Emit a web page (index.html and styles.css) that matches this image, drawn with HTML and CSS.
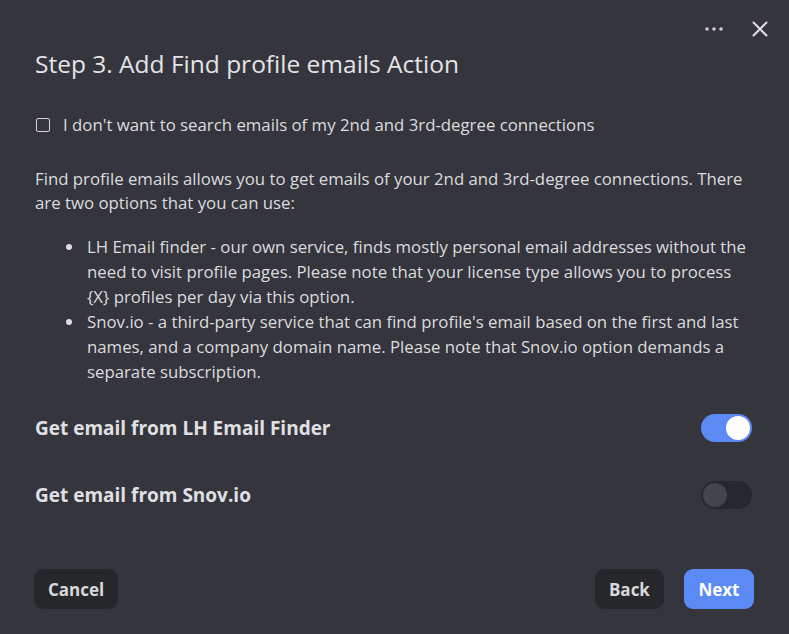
FILE: index.html
```html
<!DOCTYPE html>
<html>
<head>
<meta charset="utf-8">
<link rel="stylesheet" href="styles.css">
</head>
<body>
<div class="dialog">
  <div class="topbar">
    <button class="icon-btn" aria-label="More">
      <svg width="20" height="6" viewBox="0 0 20 6"><circle cx="3" cy="3" r="1.8" fill="#d0d0d4"/><circle cx="10" cy="3" r="1.8" fill="#d0d0d4"/><circle cx="17" cy="3" r="1.8" fill="#d0d0d4"/></svg>
    </button>
    <button class="icon-btn" aria-label="Close">
      <svg width="16" height="16" viewBox="0 0 16 16"><path d="M1.5 1.5L14.5 14.5M14.5 1.5L1.5 14.5" stroke="#e0e0e4" stroke-width="2" stroke-linecap="round"/></svg>
    </button>
  </div>
  <h1 class="title">Step 3. Add Find profile emails Action</h1>
  <label class="check-row">
    <span class="checkbox"></span>
    <span>I don't want to search emails of my 2nd and 3rd-degree connections</span>
  </label>
  <p class="desc">Find profile emails allows you to get emails of your 2nd and 3rd-degree connections. There are two options that you can use:</p>
  <ul class="list">
    <li>LH Email finder - our own service, finds mostly personal email addresses without the need to visit profile pages. Please note that your license type allows you to process {X} profiles per day via this option.</li>
    <li>Snov.io - a third-party service that can find profile's email based on the first and last names, and a company domain name. Please note that Snov.io option demands a separate subscription.</li>
  </ul>
  <div class="option">
    <span class="option-label">Get email from LH Email Finder</span>
    <span class="toggle on"><span class="knob"></span></span>
  </div>
  <div class="option">
    <span class="option-label">Get email from Snov.io</span>
    <span class="toggle"><span class="knob"></span></span>
  </div>
  <div class="footer">
    <button class="btn">Cancel</button>
    <div class="right">
      <button class="btn">Back</button>
      <button class="btn primary">Next</button>
    </div>
  </div>
</div>
</body>
</html>
```
FILE: styles.css
```css
html, body {
  margin: 0;
  padding: 0;
  background: #34353d;
}
body {
  font-family: "Open Sans", Lato, sans-serif;
  color: #dcdcdf;
}
.dialog {
  width: 789px;
  height: 634px;
  box-sizing: border-box;
  padding: 14px 35px 0 35px;
  display: flex;
  flex-direction: column;
}
.topbar {
  display: flex;
  justify-content: flex-end;
  align-items: center;
  gap: 18px;
  margin-right: -20px;
  height: 30px;
}
.icon-btn {
  background: none;
  border: 0;
  padding: 0;
  width: 28px;
  height: 30px;
  display: flex;
  align-items: center;
  justify-content: center;
}
.title {
  margin: 4px 0 0 0;
  font-size: 24.5px;
  font-weight: 400;
  line-height: 32px;
  color: #e4e4e6;
}
.check-row {
  margin-top: 33px;
  display: flex;
  align-items: center;
  gap: 13px;
  font-size: 16.8px;
  line-height: 24px;
}
.checkbox {
  width: 12px;
  height: 12px;
  border: 1.3px solid #d4d4d8;
  border-radius: 2px;
  margin-left: 1px;
}
.desc {
  margin: 30px 0 0 0;
  font-size: 16.8px;
  line-height: 24px;
}
.list {
  margin: 19px 0 0 0;
  padding-left: 50px;
  font-size: 16.8px;
  line-height: 25px;
}
.list li {
  padding-left: 2px;
}
.option {
  display: flex;
  justify-content: space-between;
  align-items: center;
  height: 28px;
}
.list + .option { margin-top: 30px; }
.option + .option { margin-top: 39px; }
.option-label {
  font-size: 19px;
  font-weight: 700;
  color: #e0e0e3;
}
.toggle {
  width: 51px;
  height: 28px;
  border-radius: 14px;
  background: #27282d;
  box-sizing: border-box;
  padding: 2px;
  display: flex;
  margin-right: 2px;
}
.toggle .knob {
  width: 24px;
  height: 24px;
  border-radius: 50%;
  background: #44454b;
}
.toggle.on {
  background: #5b8af5;
  justify-content: flex-end;
}
.toggle.on .knob {
  background: #ffffff;
}
.footer {
  margin-top: 60px;
  display: flex;
  justify-content: space-between;
  align-items: center;
  margin-left: -1px;
}
.right {
  display: flex;
  gap: 20px;
}
.btn {
  height: 40px;
  padding: 0 14px;
  border: 0;
  border-radius: 9px;
  background: #26272b;
  color: #d8d8dc;
  font-family: "Open Sans", Lato, sans-serif;
  font-size: 17px;
  font-weight: 700;
}
.btn.primary {
  background: #5b8af5;
  color: #ffffff;
  padding: 0 14.5px;
}
```
